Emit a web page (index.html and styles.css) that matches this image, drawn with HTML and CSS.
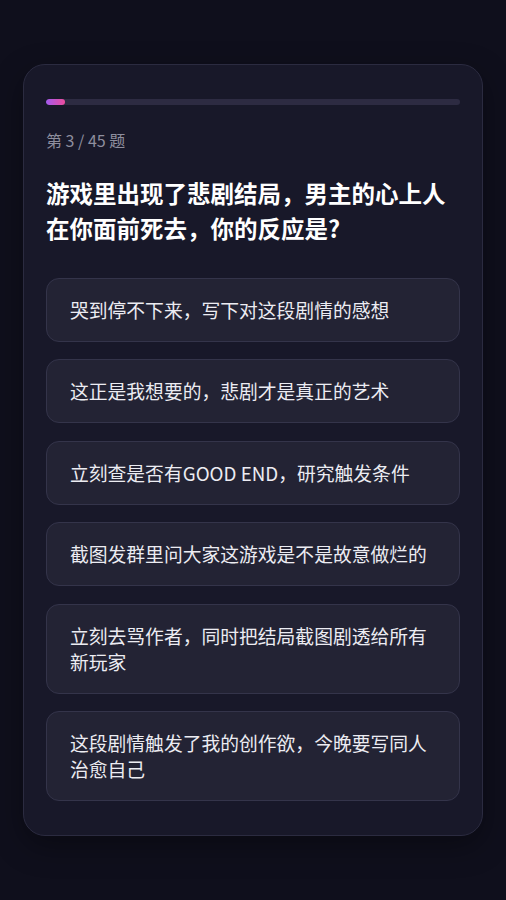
FILE: index.html
```html
<!DOCTYPE html>
<html lang="zh">
<head>
<meta charset="utf-8">
<link rel="stylesheet" href="styles.css">
</head>
<body>
<main class="page">
  <section class="card">
    <div class="progress"><div class="progress-fill" style="width: 4.6%"></div></div>
    <div class="counter">第 3 / 45 题</div>
    <h1 class="question">游戏里出现了悲剧结局，男主的心上人在你面前死去，你的反应是?</h1>
    <div class="options">
      <div class="option">哭到停不下来，写下对这段剧情的感想</div>
      <div class="option">这正是我想要的，悲剧才是真正的艺术</div>
      <div class="option">立刻查是否有GOOD END，研究触发条件</div>
      <div class="option">截图发群里问大家这游戏是不是故意做烂的</div>
      <div class="option">立刻去骂作者，同时把结局截图剧透给所有新玩家</div>
      <div class="option">这段剧情触发了我的创作欲，今晚要写同人治愈自己</div>
    </div>
  </section>
</main>
</body>
</html>
```

FILE: styles.css
```css
* { box-sizing: border-box; }
html, body { margin: 0; padding: 0; }
body {
  background: #0f0f1c;
  font-family: "Noto Sans CJK SC", "Noto Sans", sans-serif;
  color: #ececf2;
}
.page {
  height: 900px;
  display: flex;
  align-items: center;
  justify-content: center;
}
.card {
  width: 460px;
  background: #181829;
  border: 1px solid #2b2b40;
  border-radius: 22px;
  padding: 34px 22px 34px;
  box-shadow: 0 10px 30px rgba(0,0,0,0.35);
}
.progress {
  height: 6px;
  border-radius: 3px;
  background: #2d2b42;
  overflow: hidden;
}
.progress-fill {
  height: 100%;
  border-radius: 3px;
  background: linear-gradient(90deg, #a35af0, #ec4c9c);
}
.counter {
  margin-top: 24px;
  font-size: 16px;
  line-height: 22px;
  color: #8e8e9e;
}
.question {
  margin: 25px 0 0;
  font-size: 23.5px;
  line-height: 35px;
  font-weight: 700;
  color: #ffffff;
}
.options {
  margin-top: 32px;
  display: flex;
  flex-direction: column;
  gap: 17.6px;
}
.option {
  background: #232334;
  border: 1px solid #34344a;
  border-radius: 13px;
  padding: 18px 23px;
  font-size: 18.8px;
  line-height: 26px;
  color: #ececf2;
}
```
